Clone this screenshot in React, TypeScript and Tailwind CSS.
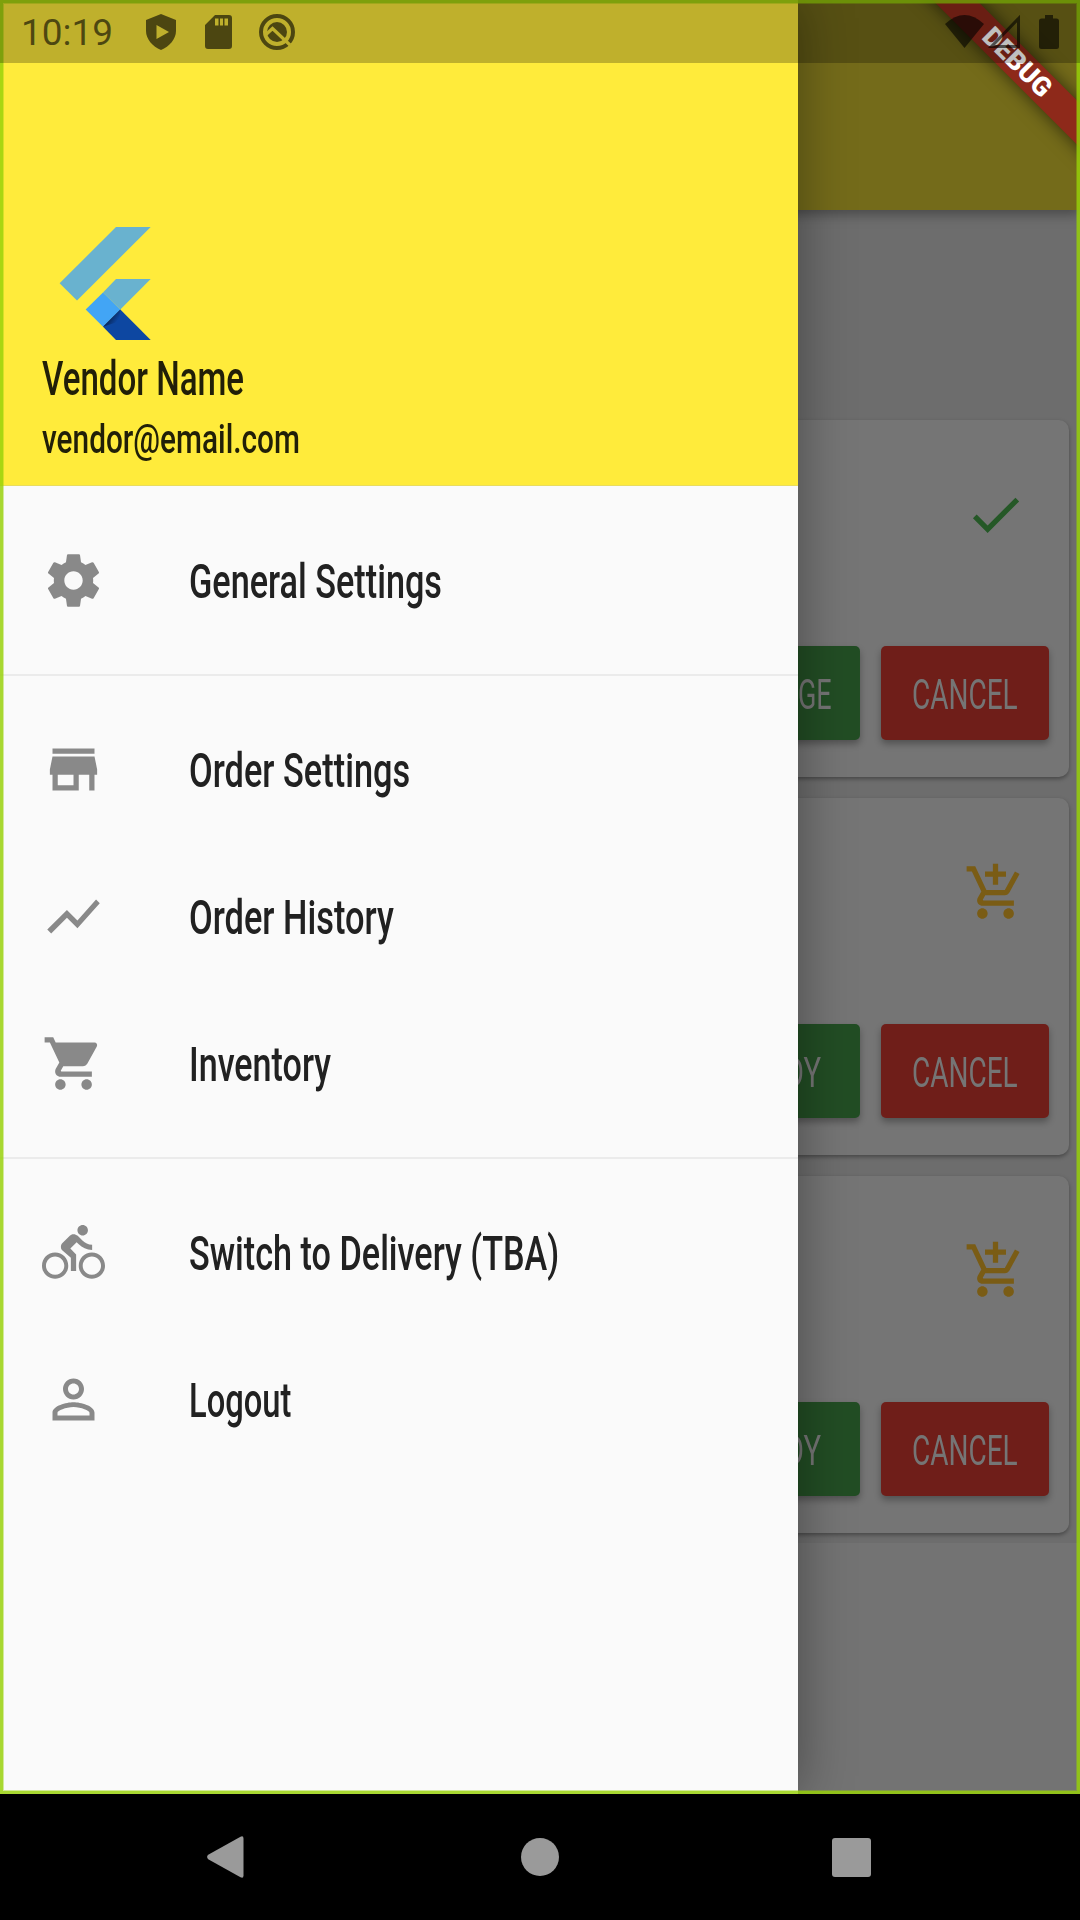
import { useLayoutEffect, useRef, useState } from "react";
import type { ReactNode } from "react";
import { MdAddShoppingCart, MdCheck, MdDirectionsBike, MdShoppingCart, MdShowChart } from "react-icons/md";

/* Condenses a line of text horizontally so that it fills the given width. */
function Condensed({ width, className, children }: { width: number; className: string; children: ReactNode }) {
  const ref = useRef<HTMLSpanElement>(null);
  const [scale, setScale] = useState(0.7);
  useLayoutEffect(() => {
    if (ref.current) setScale(width / ref.current.offsetWidth);
  }, [width]);
  return (
    <span className="block shrink-0" style={{ width }}>
      <span
        ref={ref}
        className={"inline-block origin-left whitespace-nowrap " + className}
        style={{ transform: `scaleX(${scale})` }}
      >
        {children}
      </span>
    </span>
  );
}

function PathIcon({ d }: { d: string }) {
  return (
    <svg viewBox="0 0 24 24" width="63" height="63" fill="currentColor">
      <path d={d} />
    </svg>
  );
}

const SETTINGS =
  "M19.43 12.98c.04-.32.07-.64.07-.98s-.03-.66-.07-.98l2.11-1.65c.19-.15.24-.42.12-.64l-2-3.46c-.12-.22-.39-.3-.61-.22l-2.49 1c-.52-.4-1.08-.73-1.69-.98l-.38-2.65C14.46 2.18 14.25 2 14 2h-4c-.25 0-.46.18-.49.42l-.38 2.65c-.61.25-1.17.59-1.69.98l-2.49-1c-.23-.09-.49 0-.61.22l-2 3.46c-.13.22-.07.49.12.64l2.11 1.65c-.04.32-.07.65-.07.98s.03.66.07.98l-2.11 1.65c-.19.15-.24.42-.12.64l2 3.46c.12.22.39.3.61.22l2.49-1c.52.4 1.08.73 1.69.98l.38 2.65c.03.24.24.42.49.42h4c.25 0 .46-.18.49-.42l.38-2.65c.61-.25 1.17-.59 1.69-.98l2.49 1c.23.09.49 0 .61-.22l2-3.46c.12-.22.07-.49-.12-.64l-2.11-1.65zM12 15.5c-1.93 0-3.5-1.57-3.5-3.5s1.57-3.5 3.5-3.5 3.5 1.57 3.5 3.5-1.57 3.5-3.5 3.5z";
const STORE = "M20 4H4v2h16V4zm1 10v-2l-1-5H4l-1 5v2h1v6h10v-6h4v6h2v-6h1zm-9 4H6v-4h6v4z";
const PERSON =
  "M12 5.9c1.16 0 2.1.94 2.1 2.1s-.94 2.1-2.1 2.1S9.9 9.16 9.9 8s.94-2.1 2.1-2.1m0 9c2.97 0 6.1 1.46 6.1 2.1v1.1H5.9V17c0-.64 3.13-2.1 6.1-2.1M12 4C9.79 4 8 5.79 8 8s1.79 4 4 4 4-1.79 4-4-1.79-4-4-4zm0 9c-2.67 0-8 1.34-8 4v3h16v-3c0-2.66-5.33-4-8-4z";

function MenuItem({ icon, label, width }: { icon: ReactNode; label: string; width: number }) {
  return (
    <li className="flex h-[147px] items-center pl-[42px]">
      <span className="mr-[84px] text-[#898989]">{icon}</span>
      <Condensed width={width} className="pt-[2px] text-[49px] leading-[60px] font-medium text-[#212121]">
        {label}
      </Condensed>
    </li>
  );
}

function Divider() {
  return (
    <li className="flex h-[42px] items-center">
      <span className="h-[2px] w-full bg-[#ebebeb]" />
    </li>
  );
}

function OrderCard({ action, actionWidth, pad, done }: { action: string; actionWidth: number; pad: string; done?: boolean }) {
  const button = "flex h-[94px] items-center rounded-[5px] shadow-[0_4px_7px_rgba(0,0,0,0.3)]";
  return (
    <article className="flex h-[357px] w-[1058px] flex-col justify-between rounded-[10px] bg-[#757575] pt-[63px] pb-[37px] shadow-[0_2px_4px_rgba(0,0,0,0.35)]">
      <div className={"flex justify-end pr-[42px] " + (done ? "text-[#255827]" : "text-[#7a5c15]")}>
        {done ? <MdCheck size={63} /> : <MdAddShoppingCart size={63} />}
      </div>
      <div className="flex justify-end gap-[21px] pr-[20.5px] text-[#757575]">
        <div className={`${button} w-[189px] justify-end bg-[#224d24] ${pad}`}>
          <Condensed width={actionWidth} className="pt-[3px] text-[42px] leading-[50px]">
            {action}
          </Condensed>
        </div>
        <div className={`${button} w-[168px] justify-center bg-[#6f1e19]`}>
          <Condensed width={106} className="pt-[3px] text-[42px] leading-[50px]">
            CANCEL
          </Condensed>
        </div>
      </div>
    </article>
  );
}

function FlutterLogo() {
  return (
    <svg viewBox="59 227 92 113" width="92" height="113">
      <defs>
        <linearGradient id="fold" x1="103" y1="318" x2="118" y2="328" gradientUnits="userSpaceOnUse">
          <stop offset="0.2" stopColor="#071f4a" />
          <stop offset="0.75" stopColor="#0d47a1" />
        </linearGradient>
      </defs>
      <path fill="#69b2cf" d="M116 227h34.7L77 300.5 59.6 283.3z" />
      <path fill="#69b2cf" d="M116 279h34.7l-30.4 30.6L103 292.4z" />
      <path fill="#42a5f5" d="M103 292.4l17.3 17.2L103 326.8l-17.3-17.2z" />
      <path fill="#0d47a1" d="M120.3 309.6L150.7 340H116l-13-13.2z" />
      <path fill="url(#fold)" d="M120.3 309.6L119 321.500 103 326.800z" />
    </svg>
  );
}

function StatusBar() {
  return (
    <div className="absolute inset-x-0 top-0 flex h-[63px] items-center bg-black/25 text-black/60">
      <span className="ml-[21px] w-[125px] pt-[3px] text-[37px] leading-[42px]">10:19</span>
      <svg width="32" height="36" viewBox="0 0 32 36" fill="currentColor" className="mt-px">
        <path fillRule="evenodd" d="M15 0L30 6v11c0 8-6.500 15.500-15 19C6.500 32.500 0 25 0 17V6zM10.500 11v14L23 18z" />
      </svg>
      <svg width="27" height="34" viewBox="0 0 27 34" fill="currentColor" className="ml-[27px]">
        <path fillRule="evenodd" d="M10 0h14q3 0 3 3v28q0 3-3 3H3q-3 0-3-3V10zM10 3.500v7h3.500v-7zM15 3.500v7h3v-7zM19.500 3.500v7h3.500v-7z" />
      </svg>
      <svg width="36" height="36" viewBox="0 0 36 36" className="ml-[27px]">
        <mask id="needle">
          <rect width="36" height="36" fill="white" />
          <path d="M7 20.500L13.500 14.500 31 31" fill="none" stroke="black" strokeWidth="3.200" />
        </mask>
        <g mask="url(#needle)">
          <circle cx="18" cy="18" r="16" fill="none" stroke="currentColor" strokeWidth="4" />
          <circle cx="18" cy="18" r="10" fill="currentColor" />
        </g>
      </svg>
      <span className="grow" />
      <svg width="39" height="33" viewBox="0 0 39 33" fill="currentColor">
        <path d="M19.500 33L0 9Q19.500-9 39 9z" />
      </svg>
      <svg width="32" height="33" viewBox="0 0 32 33" className="ml-[4px]" fill="none" stroke="currentColor" strokeWidth="3">
        <path d="M30.500 3.500v28H3.500z" />
      </svg>
      <svg width="20" height="34" viewBox="0 0 20 34" fill="currentColor" className="mr-[21px] ml-[19px]">
        <path d="M6 0h8v3.500h3.500Q20 3.500 20 6v25.500q0 2.500-2.500 2.500h-15Q0 34 0 31.500V6q0-2.500 2.500-2.500H6z" />
      </svg>
    </div>
  );
}

export default function App() {
  return (
    <div className="flex h-[1920px] w-[1080px] flex-col overflow-hidden bg-black font-['Roboto',sans-serif]">
      <div className="relative h-[1794px] overflow-hidden bg-[#737373]">
        {/* Orders page, dimmed while the drawer is open */}
        <header className="relative h-[210px] bg-[#746b1a] shadow-[0_4px_12px_rgba(0,0,0,0.35)]" />
        <main className="flex h-[1333px] flex-col items-center gap-[21px] bg-[#6d6d6d] pt-[210px]">
          <OrderCard action="CHANGE" actionWidth={108} pad="pr-[28px]" done />
          <OrderCard action="READY" actionWidth={90} pad="pr-[39px]" />
          <OrderCard action="READY" actionWidth={90} pad="pr-[39px]" />
        </main>

        {/* Debug ribbon */}
        <div className="absolute top-0 right-0 h-[200px] w-[200px] overflow-hidden">
          <div className="absolute top-[46.500px] -left-[13px] flex h-[31px] w-[300px] rotate-45 items-center justify-center bg-[#8e291a] text-[26.800px] leading-none font-black text-white shadow-[0_0_18px_rgba(0,0,0,0.6)]">
            DEBUG
          </div>
        </div>

        {/* Navigation drawer */}
        <aside className="absolute inset-y-0 left-0 w-[798px] bg-[#fafafa] shadow-[0_0_50px_rgba(0,0,0,0.38)]">
          <div className="flex h-[486px] flex-col border-b border-[#e8dc60] bg-[#ffeb3b] pt-[227px] text-[#211f08]">
            <div className="ml-[59px]">
              <FlutterLogo />
            </div>
            <div className="mt-[10px] ml-[42px]">
              <Condensed width={202} className="text-[49px] leading-[58px] font-medium">
                Vendor Name
              </Condensed>
            </div>
            <div className="mt-[6px] ml-[42px]">
              <Condensed width={258} className="text-[41px] leading-[50px] font-medium">
                vendor@email.com
              </Condensed>
            </div>
          </div>
          <ul className="pt-[21px]">
            <MenuItem icon={<PathIcon d={SETTINGS} />} label="General Settings" width={253} />
            <Divider />
            <MenuItem icon={<PathIcon d={STORE} />} label="Order Settings" width={221} />
            <MenuItem icon={<MdShowChart size={63} />} label="Order History" width={205} />
            <MenuItem icon={<MdShoppingCart size={63} />} label="Inventory" width={142} />
            <Divider />
            <MenuItem icon={<MdDirectionsBike size={63} />} label="Switch to Delivery (TBA)" width={370} />
            <MenuItem icon={<PathIcon d={PERSON} />} label="Logout" width={102} />
          </ul>
        </aside>

        <div className="absolute inset-0 border-[3px] border-[rgba(152,209,8,0.83)]">
          <div className="h-full border border-[rgba(152,209,8,0.4)]" />
        </div>
        <StatusBar />
      </div>

      {/* System navigation */}
      <nav className="flex h-[126px] items-center justify-center bg-black text-[#9a9a9a]">
        <span className="flex w-[311px] justify-center">
          <svg width="44" height="42" viewBox="0 0 44 42" fill="currentColor">
            <path d="M33.500 .7Q36.500-.8 36.500 2.500v37q0 3.300-3 1.800L1.200 23.200Q-1 21 1.200 18.800z" />
          </svg>
        </span>
        <span className="flex w-[311px] justify-center">
          <span className="size-[38px] rounded-full bg-[#9a9a9a]" />
        </span>
        <span className="flex w-[311px] justify-center">
          <span className="size-[39px] rounded-[3px] bg-[#9a9a9a]" />
        </span>
      </nav>
    </div>
  );
}
